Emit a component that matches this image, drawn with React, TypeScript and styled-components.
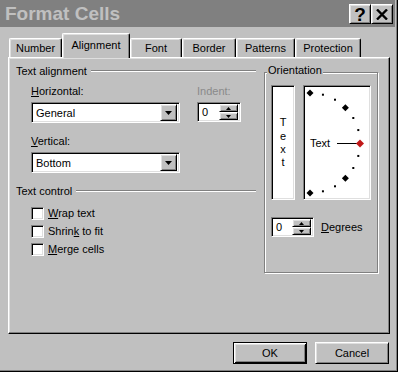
import React from 'react';
import styled, { createGlobalStyle, css } from 'styled-components';

// Classic Win9x bevels
const raised = css`
  border: 1px solid;
  border-color: #fff #000 #000 #fff;
  box-shadow: inset 1px 1px #dfdfdf, inset -1px -1px #808080;
`;

const sunken = css`
  border: 1px solid;
  border-color: #808080 #fff #fff #808080;
  box-shadow: inset 1px 1px #000, inset -1px -1px #dfdfdf;
`;

const GlobalStyle = createGlobalStyle`
  html, body { margin: 0; padding: 0; background: #c0c0c0; }
  body {
    font-family: "Liberation Sans", Arial, sans-serif;
    font-size: 11px;
    color: #000;
  }
  * { box-sizing: border-box; }
`;

const Window = styled.div`
  width: 398px;
  height: 372px;
  background: #c0c0c0;
  border-right: 1px solid #000;
  border-bottom: 1px solid #000;
  display: flex;
`;

const Frame = styled.div`
  flex: 1;
  display: flex;
  flex-direction: column;
  border-right: 1px solid #808080;
  border-bottom: 1px solid #808080;
  padding-right: 1px;
`;

const TitleBar = styled.div`
  height: 27px;
  background: #808080;
  display: flex;
  align-items: center;
  padding: 0 2px 0 5px;
`;

const Title = styled.div`
  flex: 1;
  font-weight: bold;
  font-size: 19px;
  color: #c0c0c0;
`;

const CaptionButton = styled.div`
  ${raised};
  width: 22px;
  height: 20px;
  background: #c0c0c0;
  display: flex;
  align-items: center;
  justify-content: center;
  font-weight: bold;
  font-size: 19px;
  line-height: 1;
  padding-top: 1px;
`;

const Body = styled.div`
  flex: 1;
  display: flex;
  flex-direction: column;
  padding: 6px 0 0 8px;
`;

const TabRow = styled.div`
  height: 24px;
  display: flex;
  align-items: flex-end;
  padding-left: 1px;
  position: relative;
  z-index: 1;
`;

const Tab = styled.div<{ $w: number; $active?: boolean }>`
  position: relative;
  width: ${(p) => p.$w}px;
  height: ${(p) => (p.$active ? 25 : 19)}px;
  margin-bottom: ${(p) => (p.$active ? -1 : 0)}px;
  z-index: ${(p) => (p.$active ? 2 : 1)};
  background: #c0c0c0;
  border-top: 1px solid #fff;
  border-left: 1px solid #fff;
  border-right: 1px solid #000;
  border-radius: 2px 2px 0 0;
  box-shadow: inset -1px 0 #808080, inset 1px 1px #dfdfdf;
  display: flex;
  align-items: center;
  justify-content: center;
  padding-bottom: ${(p) => (p.$active ? 3 : 0)}px;
`;

const Panel = styled.div`
  width: 382px;
  height: 277px;
  border-top: 1px solid #fff;
  border-left: 1px solid #fff;
  border-right: 1px solid #000;
  border-bottom: 1px solid #000;
  box-shadow: inset -1px -1px #808080, inset 1px 1px #dfdfdf;
  display: flex;
  gap: 8px;
  padding: 6px 0 0 7px;
`;

const LeftColumn = styled.div`
  width: 240px;
  display: flex;
  flex-direction: column;
`;

const SectionHeader = styled.div<{ $top?: number }>`
  display: flex;
  align-items: center;
  gap: 4px;
  height: 13px;
  margin-top: ${(p) => p.$top ?? 0}px;
`;

const EtchedLine = styled.div`
  flex: 1;
  height: 2px;
  border-top: 1px solid #808080;
  border-bottom: 1px solid #fff;
  margin-top: 1px;
`;

const AlignRow = styled.div`
  display: flex;
  gap: 17px;
  padding-left: 15px;
  margin-top: 8px;
`;

const FieldColumn = styled.div`
  display: flex;
  flex-direction: column;
`;

const Label = styled.div<{ $disabled?: boolean; $top?: number }>`
  height: 13px;
  line-height: 13px;
  margin-top: ${(p) => p.$top ?? 0}px;
  margin-bottom: 4px;
  color: ${(p) => (p.$disabled ? '#8a8a8a' : '#000')};
`;

const Combo = styled.div`
  ${sunken};
  width: 149px;
  height: 21px;
  background: #fff;
  display: flex;
  align-items: center;
  padding: 2px 2px 2px 4px;
`;

const ComboText = styled.div`
  flex: 1;
`;

const DropButton = styled.div`
  ${raised};
  width: 17px;
  height: 17px;
  background: #c0c0c0;
  display: flex;
  align-items: center;
  justify-content: center;
`;

const Spin = styled.div<{ $w: number }>`
  ${sunken};
  width: ${(p) => p.$w}px;
  height: 20px;
  background: #fff;
  display: flex;
  align-items: center;
  padding: 2px 2px 2px 4px;
`;

const SpinButtons = styled.div`
  display: flex;
  flex-direction: column;
  width: 19px;
  height: 16px;
`;

const SpinButton = styled.div`
  ${raised};
  flex: 1;
  background: #c0c0c0;
  display: flex;
  align-items: center;
  justify-content: center;
`;

const CheckList = styled.div`
  display: flex;
  flex-direction: column;
  padding-left: 15px;
  margin-top: 7px;
`;

const CheckRow = styled.div`
  height: 18px;
  display: flex;
  align-items: center;
  gap: 4px;
`;

const CheckBox = styled.div`
  ${sunken};
  width: 13px;
  height: 13px;
  background: #fff;
`;

const Group = styled.div`
  position: relative;
  width: 114px;
  height: 201px;
  margin-top: 8px;
  border: 1px solid #808080;
  box-shadow: inset 1px 1px #fff, 1px 1px #fff;
  padding: 12px 0 0 6px;
`;

const Legend = styled.div`
  position: absolute;
  top: -9px;
  left: 2px;
  padding: 0 1px;
  background: #c0c0c0;
  line-height: 13px;
`;

const OrientRow = styled.div`
  display: flex;
  gap: 8px;
`;

const VerticalBox = styled.div`
  ${sunken};
  width: 24px;
  height: 115px;
  background: #fff;
  display: flex;
  flex-direction: column;
  align-items: center;
  justify-content: center;
  line-height: 13.4px;
  padding-top: 1px;
`;

const DialBox = styled.div`
  ${sunken};
  width: 68px;
  height: 115px;
  background: #fff;
  padding: 2px;
`;

const DegreesRow = styled.div`
  display: flex;
  align-items: center;
  gap: 7px;
  margin-top: 17px;
`;

const ButtonRow = styled.div`
  display: flex;
  justify-content: flex-end;
  gap: 8px;
  width: 381px;
  margin-top: 8px;
`;

const PushButton = styled.div<{ $default?: boolean }>`
  width: 74px;
  height: 22px;
  display: flex;
  align-items: center;
  justify-content: center;
  background: #c0c0c0;
  ${(p) =>
    p.$default
      ? css`
          border: 1px solid #000;
          box-shadow: inset 1px 1px #fff, inset -1px -1px #000, inset 2px 2px #dfdfdf,
            inset -2px -2px #808080;
        `
      : raised};
`;

function DownArrow({ w = 7 }: { w?: number }) {
  const h = Math.ceil(w / 2);
  return (
    <svg width={w} height={h} viewBox={`0 0 ${w} ${h}`}>
      <polygon points={`0,0 ${w},0 ${w / 2},${h}`} fill="#000" />
    </svg>
  );
}

function UpArrow({ w = 5 }: { w?: number }) {
  const h = Math.ceil(w / 2);
  return (
    <svg width={w} height={h} viewBox={`0 0 ${w} ${h}`}>
      <polygon points={`0,${h} ${w},${h} ${w / 2},0`} fill="#000" />
    </svg>
  );
}

function SpinBox({ width, value }: { width: number; value: string }) {
  return (
    <Spin $w={width}>
      <ComboText>{value}</ComboText>
      <SpinButtons>
        <SpinButton>
          <UpArrow />
        </SpinButton>
        <SpinButton>
          <DownArrow w={5} />
        </SpinButton>
      </SpinButtons>
    </Spin>
  );
}

function Dial() {
  const cx = 4;
  const cy = 55;
  const r = 50;
  const marks = [];
  for (let a = 90; a >= -90; a -= 15) {
    const rad = (a * Math.PI) / 180;
    const x = cx + r * Math.cos(rad);
    const y = cy - r * Math.sin(rad);
    if (a === 0) continue;
    if (a % 45 === 0) {
      marks.push(
        <polygon
          key={a}
          points={`${x},${y - 3.5} ${x + 3.5},${y} ${x},${y + 3.5} ${x - 3.5},${y}`}
          fill="#000"
        />
      );
    } else {
      marks.push(<rect key={a} x={x - 1} y={y - 1} width={2} height={2} fill="#000" />);
    }
  }
  return (
    <svg width={64} height={111} viewBox="0 0 64 111">
      {marks}
      <text x={4} y={59} fontSize={11} fontFamily="Liberation Sans, Arial, sans-serif">
        Text
      </text>
      <line x1={31} y1={55.5} x2={52} y2={55.5} stroke="#000" strokeWidth={1} />
      <polygon points="54,51.5 58,55.5 54,59.5 50,55.5" fill="#c01818" />
    </svg>
  );
}

const tabs = [
  { name: 'Number', w: 53 },
  { name: 'Alignment', w: 68, active: true },
  { name: 'Font', w: 52 },
  { name: 'Border', w: 54 },
  { name: 'Patterns', w: 59 },
  { name: 'Protection', w: 66 },
];

export default function App() {
  return (
    <>
      <GlobalStyle />
      <Window>
        <Frame>
          <TitleBar>
            <Title>Format Cells</Title>
            <CaptionButton>?</CaptionButton>
            <CaptionButton>
              <svg width="12" height="11" viewBox="0 0 12 11">
                <path d="M1 0.5 L11 10.5 M11 0.5 L1 10.5" stroke="#000" strokeWidth="2.4" />
              </svg>
            </CaptionButton>
          </TitleBar>
          <Body>
            <TabRow>
              {tabs.map((t) => (
                <Tab key={t.name} $w={t.w} $active={t.active}>
                  {t.name}
                </Tab>
              ))}
            </TabRow>
            <Panel>
              <LeftColumn>
                <SectionHeader>
                  <span>Text alignment</span>
                  <EtchedLine />
                </SectionHeader>
                <AlignRow>
                  <FieldColumn>
                    <Label>
                      <u>H</u>orizontal:
                    </Label>
                    <Combo>
                      <ComboText>General</ComboText>
                      <DropButton>
                        <DownArrow />
                      </DropButton>
                    </Combo>
                    <Label $top={12}>
                      <u>V</u>ertical:
                    </Label>
                    <Combo>
                      <ComboText>Bottom</ComboText>
                      <DropButton>
                        <DownArrow />
                      </DropButton>
                    </Combo>
                  </FieldColumn>
                  <FieldColumn>
                    <Label $disabled>Indent:</Label>
                    <SpinBox width={44} value="0" />
                  </FieldColumn>
                </AlignRow>
                <SectionHeader $top={11}>
                  <span>Text control</span>
                  <EtchedLine />
                </SectionHeader>
                <CheckList>
                  <CheckRow>
                    <CheckBox />
                    <span>
                      <u>W</u>rap text
                    </span>
                  </CheckRow>
                  <CheckRow>
                    <CheckBox />
                    <span>
                      Shrin<u>k</u> to fit
                    </span>
                  </CheckRow>
                  <CheckRow>
                    <CheckBox />
                    <span>
                      <u>M</u>erge cells
                    </span>
                  </CheckRow>
                </CheckList>
              </LeftColumn>
              <Group>
                <Legend>Orientation</Legend>
                <OrientRow>
                  <VerticalBox>
                    <span>T</span>
                    <span>e</span>
                    <span>x</span>
                    <span>t</span>
                  </VerticalBox>
                  <DialBox>
                    <Dial />
                  </DialBox>
                </OrientRow>
                <DegreesRow>
                  <SpinBox width={43} value="0" />
                  <span>
                    <u>D</u>egrees
                  </span>
                </DegreesRow>
              </Group>
            </Panel>
            <ButtonRow>
              <PushButton $default>OK</PushButton>
              <PushButton>Cancel</PushButton>
            </ButtonRow>
          </Body>
        </Frame>
      </Window>
    </>
  );
}
